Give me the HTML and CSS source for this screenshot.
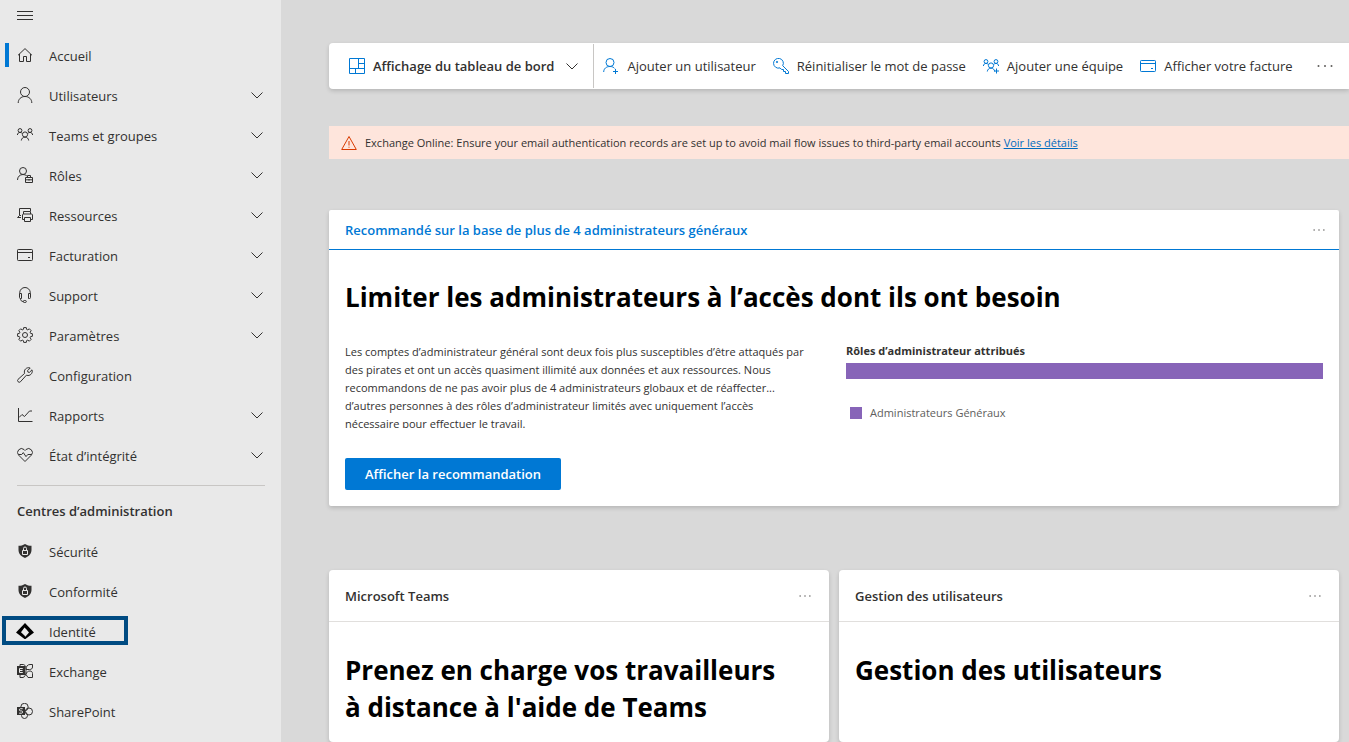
FILE: index.html
```html
<!DOCTYPE html>
<html lang="fr">
<head>
    <meta charset="UTF-8">
    <meta name="viewport" content="width=device-width, initial-scale=1.0">
    <title>Centre d’administration Microsoft 365</title>
    <link rel="stylesheet" href="styles.css">
</head>
<body>
    <!-- Shared icons -->
    <svg class="sprite" aria-hidden="true">
        <symbol id="i-chevron" viewBox="0 0 12 12"><path d="M.5 3.500 6 9l5.500-5.500"/></symbol>
        <symbol id="i-team" viewBox="0 0 16 16">
            <circle cx="3" cy="3.500" r="1.900"/><circle cx="13" cy="3.500" r="1.900"/><circle cx="8" cy="7.500" r="2.600"/>
            <path d="M.4 8C.5 6.500 1.500 5.400 3 5.400c1 0 1.900.5 2.400 1.300M15.600 8c-.1-1.500-1.100-2.600-2.600-2.600-1 0-1.900.5-2.400 1.300M4.300 13.500c.2-2 1.700-3.400 3.700-3.400s3.500 1.400 3.700 3.400"/>
        </symbol>
        <symbol id="i-card" viewBox="0 0 16 16"><rect x=".5" y="2.500" width="15" height="11" rx=".8"/><path d="M.5 5.500h15M11 10.500h2"/></symbol>
        <symbol id="i-dots" viewBox="0 0 16 16"><circle cx="1.500" cy="8" r="1"/><circle cx="8" cy="8" r="1"/><circle cx="14.500" cy="8" r="1"/></symbol>
        <symbol id="i-shield" viewBox="0 0 16 16">
            <path class="solid" d="M8 1c2 1.300 4.200 1.800 6.500 1.800V7c0 3.800-2.500 6.300-6.500 8-4-1.700-6.500-4.200-6.500-8V2.800C3.800 2.800 6 2.300 8 1z"/>
            <path class="cut" d="M5.500 7.500h5v4h-5zM6.500 7.500V5.500a1.500 1.500 0 0 1 3 0v2"/>
        </symbol>
    </svg>

    <div class="app">
        <nav class="sidebar" aria-label="Navigation">
            <button class="menu-btn" aria-label="Réduire le menu">
                <svg class="icon" viewBox="0 0 16 16"><path d="M0 4.500h16M0 8.500h16M0 12.500h16"/></svg>
            </button>

            <ul class="nav-list">
                <li><a class="nav-link active" href="#">
                    <svg class="icon" viewBox="0 0 16 16"><path d="M1 8.300 8 1.600l7 6.700M2.500 7v7.500h4v-5h3v5h4V7"/></svg>
                    <span>Accueil</span>
                </a></li>
                <li><a class="nav-link" href="#">
                    <svg class="icon" viewBox="0 0 16 16"><circle cx="8" cy="5" r="4.500"/><path d="M1.200 16C1.200 12.200 4 9.500 8 9.500s6.800 2.700 6.800 6.500"/></svg>
                    <span>Utilisateurs</span>
                    <svg class="chevron"><use href="#i-chevron"/></svg>
                </a></li>
                <li><a class="nav-link" href="#">
                    <svg class="icon"><use href="#i-team"/></svg>
                    <span>Teams et groupes</span>
                    <svg class="chevron"><use href="#i-chevron"/></svg>
                </a></li>
                <li><a class="nav-link" href="#">
                    <svg class="icon" viewBox="0 0 16 16"><circle cx="6" cy="4" r="3.500"/><path d="M.5 13c0-3.200 2.300-5.500 5.500-5.500 1.500 0 2.800.5 3.800 1.400M8.500 10.500h7v5h-7zM10.500 10.500v-2h3v2M8.500 12.800h7M12 12v1.600"/></svg>
                    <span>Rôles</span>
                    <svg class="chevron"><use href="#i-chevron"/></svg>
                </a></li>
                <li><a class="nav-link" href="#">
                    <svg class="icon" viewBox="0 0 16 16"><path d="M2.500 8.500v-7h11V4M4 10.500H.5l2-2H4M6.500 7V4.500h7V7M7 12.500H5.500V8c0-.6.4-1 1-1h8c.6 0 1 .4 1 1v4.500H13.500M7.500 10.500h6v4h-6z"/></svg>
                    <span>Ressources</span>
                    <svg class="chevron"><use href="#i-chevron"/></svg>
                </a></li>
                <li><a class="nav-link" href="#">
                    <svg class="icon"><use href="#i-card"/></svg>
                    <span>Facturation</span>
                    <svg class="chevron"><use href="#i-chevron"/></svg>
                </a></li>
                <li><a class="nav-link" href="#">
                    <svg class="icon" viewBox="0 0 16 16"><path d="M2.700 6.500V5.800a5.300 5.300 0 0 1 10.600 0v.7M2.500 6.500h2v5h-1a1 1 0 0 1-1-1zM13.500 6.500h-2v5h1a1 1 0 0 0 1-1zM3.500 11.500c0 2 1 3 2.800 3"/><rect x="6.300" y="13.500" width="3" height="2" rx="1"/></svg>
                    <span>Support</span>
                    <svg class="chevron"><use href="#i-chevron"/></svg>
                </a></li>
                <li><a class="nav-link" href="#">
                    <svg class="icon" viewBox="0 0 16 16"><circle cx="8" cy="8" r="2.500"/><path d="M6.700.6h2.600l.3 1.800 1.200.5 1.500-1.100 1.900 1.900-1.100 1.500.5 1.200 1.800.3v2.600l-1.800.3-.5 1.200 1.100 1.500-1.900 1.900-1.500-1.100-1.200.5-.3 1.800H6.700l-.3-1.800-1.200-.5-1.500 1.100-1.900-1.900 1.100-1.500-.5-1.200-1.800-.3V6.700l1.800-.3.5-1.200-1.100-1.500 1.900-1.900 1.500 1.100 1.200-.5z"/></svg>
                    <span>Paramètres</span>
                    <svg class="chevron"><use href="#i-chevron"/></svg>
                </a></li>
                <li><a class="nav-link" href="#">
                    <svg class="icon" viewBox="0 0 16 16"><path d="M13.200 1 10.600 3.600l.3 1.500 1.500.3L15 2.800c1 2.700-1 5.700-4 5.700-.6 0-1.100-.1-1.600-.3l-6 6.600a1.700 1.700 0 0 1-2.400-2.400l6.600-6C6.400 3 9.500-.3 13.200 1z"/></svg>
                    <span>Configuration</span>
                </a></li>
                <li><a class="nav-link" href="#">
                    <svg class="icon" viewBox="0 0 16 16"><path d="M1.500 1v13.500H15.500M2 10.500l3-3 2.500 2 5-5.500H15"/></svg>
                    <span>Rapports</span>
                    <svg class="chevron"><use href="#i-chevron"/></svg>
                </a></li>
                <li><a class="nav-link" href="#">
                    <svg class="icon" viewBox="0 0 16 16"><path d="M8 14.500 1.600 8.100A3.900 3.900 0 0 1 7 2.500l1 1 1-1a3.900 3.900 0 0 1 5.400 5.600zM1.700 7.500h3L6.300 5.600l2.700 4 1.800-2.100h3.500"/></svg>
                    <span>État d’intégrité</span>
                    <svg class="chevron"><use href="#i-chevron"/></svg>
                </a></li>
            </ul>

            <h2 class="nav-title">Centres d’administration</h2>

            <ul class="nav-list">
                <li><a class="nav-link" href="#">
                    <svg class="icon"><use href="#i-shield"/></svg>
                    <span>Sécurité</span>
                </a></li>
                <li><a class="nav-link" href="#">
                    <svg class="icon"><use href="#i-shield"/></svg>
                    <span>Conformité</span>
                </a></li>
                <li><a class="nav-link highlighted" href="#">
                    <svg class="icon icon-identity" viewBox="0 0 18 18"><path class="solid" fill-rule="evenodd" d="M9 1 18 10.500 9.500 17H8.500L0 10.500zM8.500 5.500 5 10.300l3.500 3.200.8 1.200 3.700-4.200-2.500-3z"/></svg>
                    <span>Identité</span>
                </a></li>
                <li><a class="nav-link" href="#">
                    <svg class="icon" viewBox="0 0 16 16"><path d="M3 3V1.500h3c2 0 3 2 3 6s-1 6.500-3 7H3V12M15.500 1.500H13c-2.500 0-4 2-4 5h3.500c2 0 3-1 3-2.500zM15.500 14.500v-4c0-1.500-1-2.500-2.500-2.500-2 0-3.500 1-4 3.500l2 3z"/><path class="solid" d="M0 3h8v9H0z"/><path class="cut" d="M5.800 5.500H2.500v4h3.300M2.500 7.500h3"/></svg>
                    <span>Exchange</span>
                </a></li>
                <li><a class="nav-link" href="#">
                    <svg class="icon" viewBox="0 0 16 16"><circle cx="7.500" cy="4" r="3.700"/><circle cx="12" cy="8.500" r="3.500"/><circle cx="7.500" cy="12.500" r="3"/><path class="solid" d="M0 4h8v8H0z"/><path class="cut" d="M5.700 5.700H3.500c-1.500 0-1.500 2.200 0 2.200h1c1.500 0 1.500 2.300 0 2.300H2.200"/></svg>
                    <span>SharePoint</span>
                </a></li>
            </ul>
        </nav>

        <main class="content">
            <div class="toolbar">
                <button class="tool view-btn">
                    <svg class="icon" viewBox="0 0 16 16"><path d="M.5.5h15v15H.5zM.5 10.500h15M9.500.5v10M9.500 5.500h6M6.500 10.500v5"/></svg>
                    <span>Affichage du tableau de bord</span>
                    <svg class="chevron"><use href="#i-chevron"/></svg>
                </button>
                <button class="tool">
                    <svg class="icon" viewBox="0 0 16 16"><circle cx="7" cy="4.500" r="4"/><path d="M.7 14c0-3.400 2.600-5.500 6.300-5.500 2 0 3.700.7 4.700 2M12.500 11v5M10 13.500h5"/></svg>
                    <span>Ajouter un utilisateur</span>
                </button>
                <button class="tool">
                    <svg class="icon" viewBox="0 0 16 16"><path d="M9.700 7.700l5.800 5.800v2h-3v-2h-2v-2H8.600L7 9.900A4.900 4.900 0 1 1 9.700 7.700z"/><circle cx="4" cy="4" r=".7"/></svg>
                    <span>Réinitialiser le mot de passe</span>
                </button>
                <button class="tool">
                    <svg class="icon" viewBox="0 0 16 16"><use href="#i-team"/><path d="M13.500 10.500v5M11 13h5"/></svg>
                    <span>Ajouter une équipe</span>
                </button>
                <button class="tool">
                    <svg class="icon"><use href="#i-card"/></svg>
                    <span>Afficher votre facture</span>
                </button>
                <button class="more" aria-label="Plus d’actions"><svg class="dots"><use href="#i-dots"/></svg></button>
            </div>

            <div class="alert" role="alert">
                <svg class="icon" viewBox="0 0 16 16"><path d="M8 1.500 15.300 14.500H.7zM8 6v4.500M8 11.700v1"/></svg>
                <p>Exchange Online: Ensure your email authentication records are set up to avoid mail flow issues to third-party email accounts <a href="#">Voir les détails</a></p>
            </div>

            <section class="card recommendation">
                <header class="card-header">
                    <h2>Recommandé sur la base de plus de 4 administrateurs généraux</h2>
                    <button class="more" aria-label="Plus d’options"><svg class="dots small"><use href="#i-dots"/></svg></button>
                </header>
                <div class="card-body">
                    <h3>Limiter les administrateurs à l’accès dont ils ont besoin</h3>
                    <div class="columns">
                        <div>
                            <p class="description">Les comptes d’administrateur général sont deux fois plus susceptibles d’être attaqués par<br>
                                des pirates et ont un accès quasiment illimité aux données et aux ressources. Nous<br>
                                recommandons de ne pas avoir plus de 4 administrateurs globaux et de réaffecter...<br>
                                d’autres personnes à des rôles d’administrateur limités avec uniquement l’accès<br>
                                nécessaire pour effectuer le travail.</p>
                            <button class="primary-btn">Afficher la recommandation</button>
                        </div>
                        <div class="chart">
                            <h4>Rôles d’administrateur attribués</h4>
                            <div class="bar"></div>
                            <p class="legend"><span class="swatch"></span>Administrateurs Généraux</p>
                        </div>
                    </div>
                </div>
            </section>

            <div class="tiles">
                <section class="card">
                    <header class="card-header">
                        <h2>Microsoft Teams</h2>
                        <button class="more" aria-label="Plus d’options"><svg class="dots small"><use href="#i-dots"/></svg></button>
                    </header>
                    <div class="card-body">
                        <h3>Prenez en charge vos travailleurs à&nbsp;distance à l'aide de Teams</h3>
                    </div>
                </section>
                <section class="card">
                    <header class="card-header">
                        <h2>Gestion des utilisateurs</h2>
                        <button class="more" aria-label="Plus d’options"><svg class="dots small"><use href="#i-dots"/></svg></button>
                    </header>
                    <div class="card-body">
                        <h3>Gestion des utilisateurs</h3>
                    </div>
                </section>
            </div>
        </main>
    </div>
</body>
</html>
```

FILE: styles.css
```css
/* Basic Reset */
*,
*::before,
*::after {
    margin: 0;
    padding: 0;
    box-sizing: border-box;
}

body {
    font-family: 'Segoe UI', 'Open Sans', 'Noto Sans', sans-serif;
    font-size: 13px;
    line-height: 20px;
    color: #323130;
    background: #d9d9d9;
}

ul {
    list-style: none;
}

button {
    font: inherit;
    color: inherit;
    background: none;
    border: none;
    cursor: pointer;
}

/* Icons */
.sprite {
    display: none;
}

.icon,
.chevron {
    flex: none;
    fill: none;
    stroke: currentColor;
    stroke-width: 1px;
}

.icon {
    width: 16px;
    height: 16px;
}

.chevron {
    width: 12px;
    height: 12px;
}

.solid {
    fill: currentColor;
    stroke: none;
}

.cut {
    stroke: #e9e9e9;
}

.dots {
    display: block;
    width: 16px;
    height: 16px;
    fill: #605e5c;
}

.dots.small {
    width: 12px;
    height: 12px;
}

/* Layout */
.app {
    display: flex;
    height: 100vh;
    overflow: hidden;
}

.content {
    flex: 1;
    min-width: 0;
    padding: 43px 0 0 48px;
}

/* Sidebar */
.sidebar {
    flex: none;
    width: 281px;
    background: #e9e9e9;
}

.menu-btn {
    display: flex;
    align-items: center;
    height: 30px;
    margin-bottom: 6px;
    padding: 0 17px;
}

.nav-link {
    position: relative;
    display: flex;
    align-items: center;
    gap: 16px;
    height: 40px;
    padding: 0 18px 0 17px;
    color: inherit;
    text-decoration: none;
}

.nav-link svg {
    margin-bottom: 2px;
}

.nav-link .chevron {
    margin-left: auto;
}

.nav-link .icon-identity {
    width: 18px;
    height: 18px;
    margin: 0 -1px 2px;
    color: #000;
}

.nav-link.active::before {
    content: '';
    position: absolute;
    left: 5px;
    top: 7px;
    width: 4px;
    height: 24px;
    background: #0078d4;
}

.nav-link.highlighted::after {
    content: '';
    position: absolute;
    left: 2px;
    top: 4px;
    width: 126px;
    height: 29px;
    border: 4px solid #004b82;
}

.nav-title {
    margin: 9px 16px 11px 17px;
    padding-top: 15px;
    border-top: 1px solid #c8c6c4;
    font-size: 13px;
    font-weight: 600;
}

/* Toolbar */
.toolbar {
    display: flex;
    align-items: center;
    height: 46px;
    padding-left: 12px;
    background: #fff;
    border-radius: 4px 0 0 4px;
    box-shadow: 0 2px 4px rgba(0,0,0,0.16);
    white-space: nowrap;
}

.tool {
    display: flex;
    align-items: center;
    gap: 8px;
    height: 44px;
    padding: 0 8px;
}

.tool + .tool {
    margin-left: 1px;
}

.tool .icon {
    color: #0078d4;
}

.view-btn {
    padding-right: 15px;
    border-right: 1px solid #c8c6c4;
    font-weight: 600;
}

.view-btn .chevron {
    margin-left: 4px;
}

.toolbar .more {
    margin-left: 16px;
}

/* Alert */
.alert {
    display: flex;
    align-items: center;
    gap: 8px;
    height: 33px;
    margin-top: 37px;
    padding: 0 12px;
    background: #fee5dc;
    font-size: 11px;
    white-space: nowrap;
}

.alert .icon {
    color: #d83b01;
}

.alert a {
    color: #006cbe;
}

/* Cards */
.card {
    background: #fff;
    border-radius: 4px;
    box-shadow: 0 2px 4px rgba(0,0,0,0.16);
}

.card-header {
    display: flex;
    align-items: center;
    justify-content: space-between;
    height: 52px;
    padding: 0 18px 0 16px;
    border-bottom: 1px solid #e1dfdd;
}

.card-header h2 {
    font-size: 13px;
    font-weight: 600;
}

.card-body {
    padding: 30px 16px 16px;
}

.card-body h3 {
    font-size: 26px;
    font-weight: 700;
    line-height: 37px;
    color: #000;
}

.recommendation {
    margin: 51px 10px 0 0;
    border-radius: 2px;
}

.recommendation .card-header {
    height: 40px;
    padding-right: 14px;
    border-bottom-color: #0078d4;
    color: #0078d4;
}

.recommendation .card-body {
    padding-top: 29px;
}

.columns {
    display: grid;
    grid-template-columns: 1fr 1fr;
    gap: 24px;
    margin-top: 27px;
}

.description {
    max-height: 85px;
    overflow: hidden;
    font-size: 11px;
    line-height: 18px;
    white-space: nowrap;
}

.primary-btn {
    height: 32px;
    margin-top: 30px;
    padding: 0 20px;
    background: #0078d4;
    border-radius: 2px;
    color: #fff;
    font-weight: 600;
}

.chart h4 {
    font-size: 11px;
    font-weight: 700;
    line-height: 16px;
}

.bar {
    height: 16px;
    margin-top: 4px;
    background: #8764b8;
}

.legend {
    display: flex;
    align-items: center;
    gap: 8px;
    margin: 24px 0 0 4px;
    font-size: 11px;
    color: #605e5c;
}

.swatch {
    width: 12px;
    height: 12px;
    background: #8764b8;
}

.tiles {
    display: grid;
    grid-template-columns: 1fr 1fr;
    gap: 10px;
    margin: 64px 10px 0 0;
}
```
